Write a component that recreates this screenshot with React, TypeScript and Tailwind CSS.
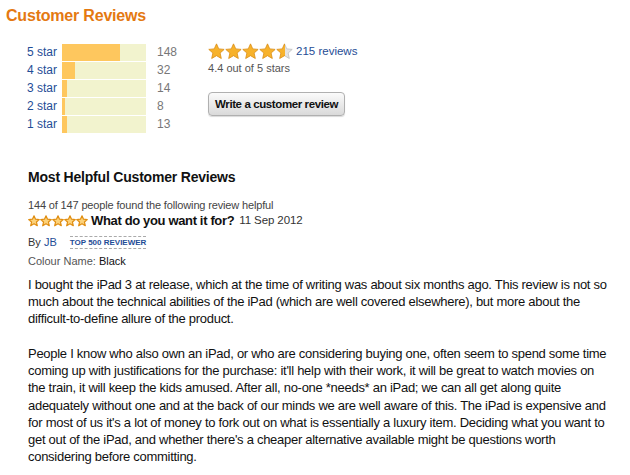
import React from "react";

const BigStar = ({ fill, id }: { fill: number; id: string }) => (
  <svg width="17" height="17" viewBox="0 0 24 24" className="block">
    <defs>
      <linearGradient id={`g${id}`} x1="0" y1="0" x2="1" y2="0">
        <stop offset={`${fill * 100}%`} stopColor="#F7B22B" />
        <stop offset={`${fill * 100}%`} stopColor="#E4E4E4" />
      </linearGradient>
      <linearGradient id={`s${id}`} x1="0" y1="0" x2="1" y2="0">
        <stop offset={`${fill * 100}%`} stopColor="#D98A10" />
        <stop offset={`${fill * 100}%`} stopColor="#BDBDBD" />
      </linearGradient>
    </defs>
    <polygon
      points="12,1.2 15.2,8.3 22.9,9.0 17.1,14.2 18.8,21.9 12,17.9 5.2,21.9 6.9,14.2 1.1,9.0 8.8,8.3"
      fill={`url(#g${id})`}
      stroke={`url(#s${id})`}
      strokeWidth="1.1"
      strokeLinejoin="round"
    />
  </svg>
);

const SmallStar = () => (
  <svg width="12" height="12" viewBox="0 0 24 24" className="block">
    <polygon
      points="12,1.5 15.1,8.4 22.6,9.1 16.9,14.1 18.6,21.5 12,17.6 5.4,21.5 7.1,14.1 1.4,9.1 8.9,8.4"
      fill="#FCD27A"
      stroke="#E08E12"
      strokeWidth="2.4"
      strokeLinejoin="round"
    />
  </svg>
);

const rows = [
  { label: "5 star", count: 148, w: 58 },
  { label: "4 star", count: 32, w: 13 },
  { label: "3 star", count: 14, w: 5 },
  { label: "2 star", count: 8, w: 3 },
  { label: "1 star", count: 13, w: 5 },
];

export default function App() {
  return (
    <div
      className="w-[630px] h-[475px] overflow-hidden bg-white text-[#111]"
      style={{ fontFamily: '"Liberation Sans", Arial, sans-serif' }}
    >
      <div className="pt-[7px] pl-[6px] text-[16px] leading-[18px] font-bold tracking-[-0.2px] text-[#E47911]">
        Customer Reviews
      </div>

      <div className="mt-[18px] flex">
        <div className="flex flex-col pl-[27px]">
          {rows.map((r) => (
            <div key={r.label} className="flex items-center h-[18px]">
              <span className="w-[35px] text-[12px] leading-[14px] text-[#1F4D96]">{r.label}</span>
              <div className="w-[84px] h-[17px] bg-[#F2F3CE] flex">
                <div className="h-full bg-[#FEC75E]" style={{ width: r.w }} />
              </div>
              <span className="ml-[11px] text-[12px] leading-[14px] text-[#777]">{r.count}</span>
            </div>
          ))}
        </div>

        <div className="ml-[31px] flex flex-col">
          <div className="flex items-center h-[16px]">
            <div className="flex">
              <BigStar fill={1} id="a" />
              <BigStar fill={1} id="b" />
              <BigStar fill={1} id="c" />
              <BigStar fill={1} id="d" />
              <BigStar fill={0.5} id="e" />
            </div>
            <span className="ml-[3px] text-[11.5px] leading-[14px] text-[#1F4D96]">215 reviews</span>
          </div>
          <div className="mt-[3px] text-[11px] leading-[13px] text-[#555]">4.4 out of 5 stars</div>
          <button className="mt-[17px] w-[137px] h-[24px] rounded-[4px] border border-[#B0B0B0] bg-gradient-to-b from-[#FBFBFB] to-[#DADADA] shadow-[0_1px_1px_rgba(0,0,0,0.15)] text-[11.5px] font-bold text-[#111] leading-[14px] whitespace-nowrap tracking-[-0.4px]">
            Write a customer review
          </button>
        </div>
      </div>

      <div className="pl-[28px]">
        <div className="mt-[36px] text-[14px] leading-[17px] font-bold tracking-[-0.2px] text-[#111]">
          Most Helpful Customer Reviews
        </div>
        <div className="mt-[12px] text-[11px] leading-[14px] tracking-[-0.15px] text-[#444]">
          144 of 147 people found the following review helpful
        </div>
        <div className="flex items-center h-[17px]">
          <div className="flex">
            <SmallStar />
            <SmallStar />
            <SmallStar />
            <SmallStar />
            <SmallStar />
          </div>
          <span className="ml-[3px] text-[13px] leading-[17px] font-bold tracking-[-0.35px] text-[#111]">
            What do you want it for?
          </span>
          <span className="ml-[5px] text-[11.5px] leading-[17px] tracking-[-0.1px] text-[#333]">11 Sep 2012</span>
        </div>
        <div className="mt-[5px] flex items-center h-[16px]">
          <span className="text-[11px] leading-[16px] text-[#333]">
            By <span className="text-[#1F4D96]">JB</span>
          </span>
          <span className="ml-[13px] border-y border-dashed border-[#AAA] text-[8px] leading-[11px] font-bold text-[#1F4D96]">
            TOP 500 REVIEWER
          </span>
        </div>
        <div className="mt-[3px] text-[11px] leading-[16px] text-[#555]">
          Colour Name: <span className="text-[#111]">Black</span>
        </div>
        <div className="mt-[6.5px] w-[580px] text-[13px] leading-[17.3px] tracking-[-0.28px] text-[#111]">
          <p>
            I bought the iPad 3 at release, which at the time of writing was about six months ago. This review is not so much
            about the technical abilities of the iPad (which are well covered elsewhere), but more about the
            difficult-to-define allure of the product.
          </p>
          <p className="mt-[17.3px]">
            People I know who also own an iPad, or who are considering buying one, often seem to spend some time coming up with
            justifications for the purchase: it'll help with their work, it will be great to watch movies on the train, it
            will keep the kids amused. After all, no-one *needs* an iPad; we can all get along quite adequately without one and
            at the back of our minds we are well aware of this. The iPad is expensive and for most of us it's a lot of money to
            fork out on what is essentially a luxury item. Deciding what you want to get out of the iPad, and whether there's a
            cheaper alternative available might be questions worth considering before committing.
          </p>
        </div>
      </div>
    </div>
  );
}
